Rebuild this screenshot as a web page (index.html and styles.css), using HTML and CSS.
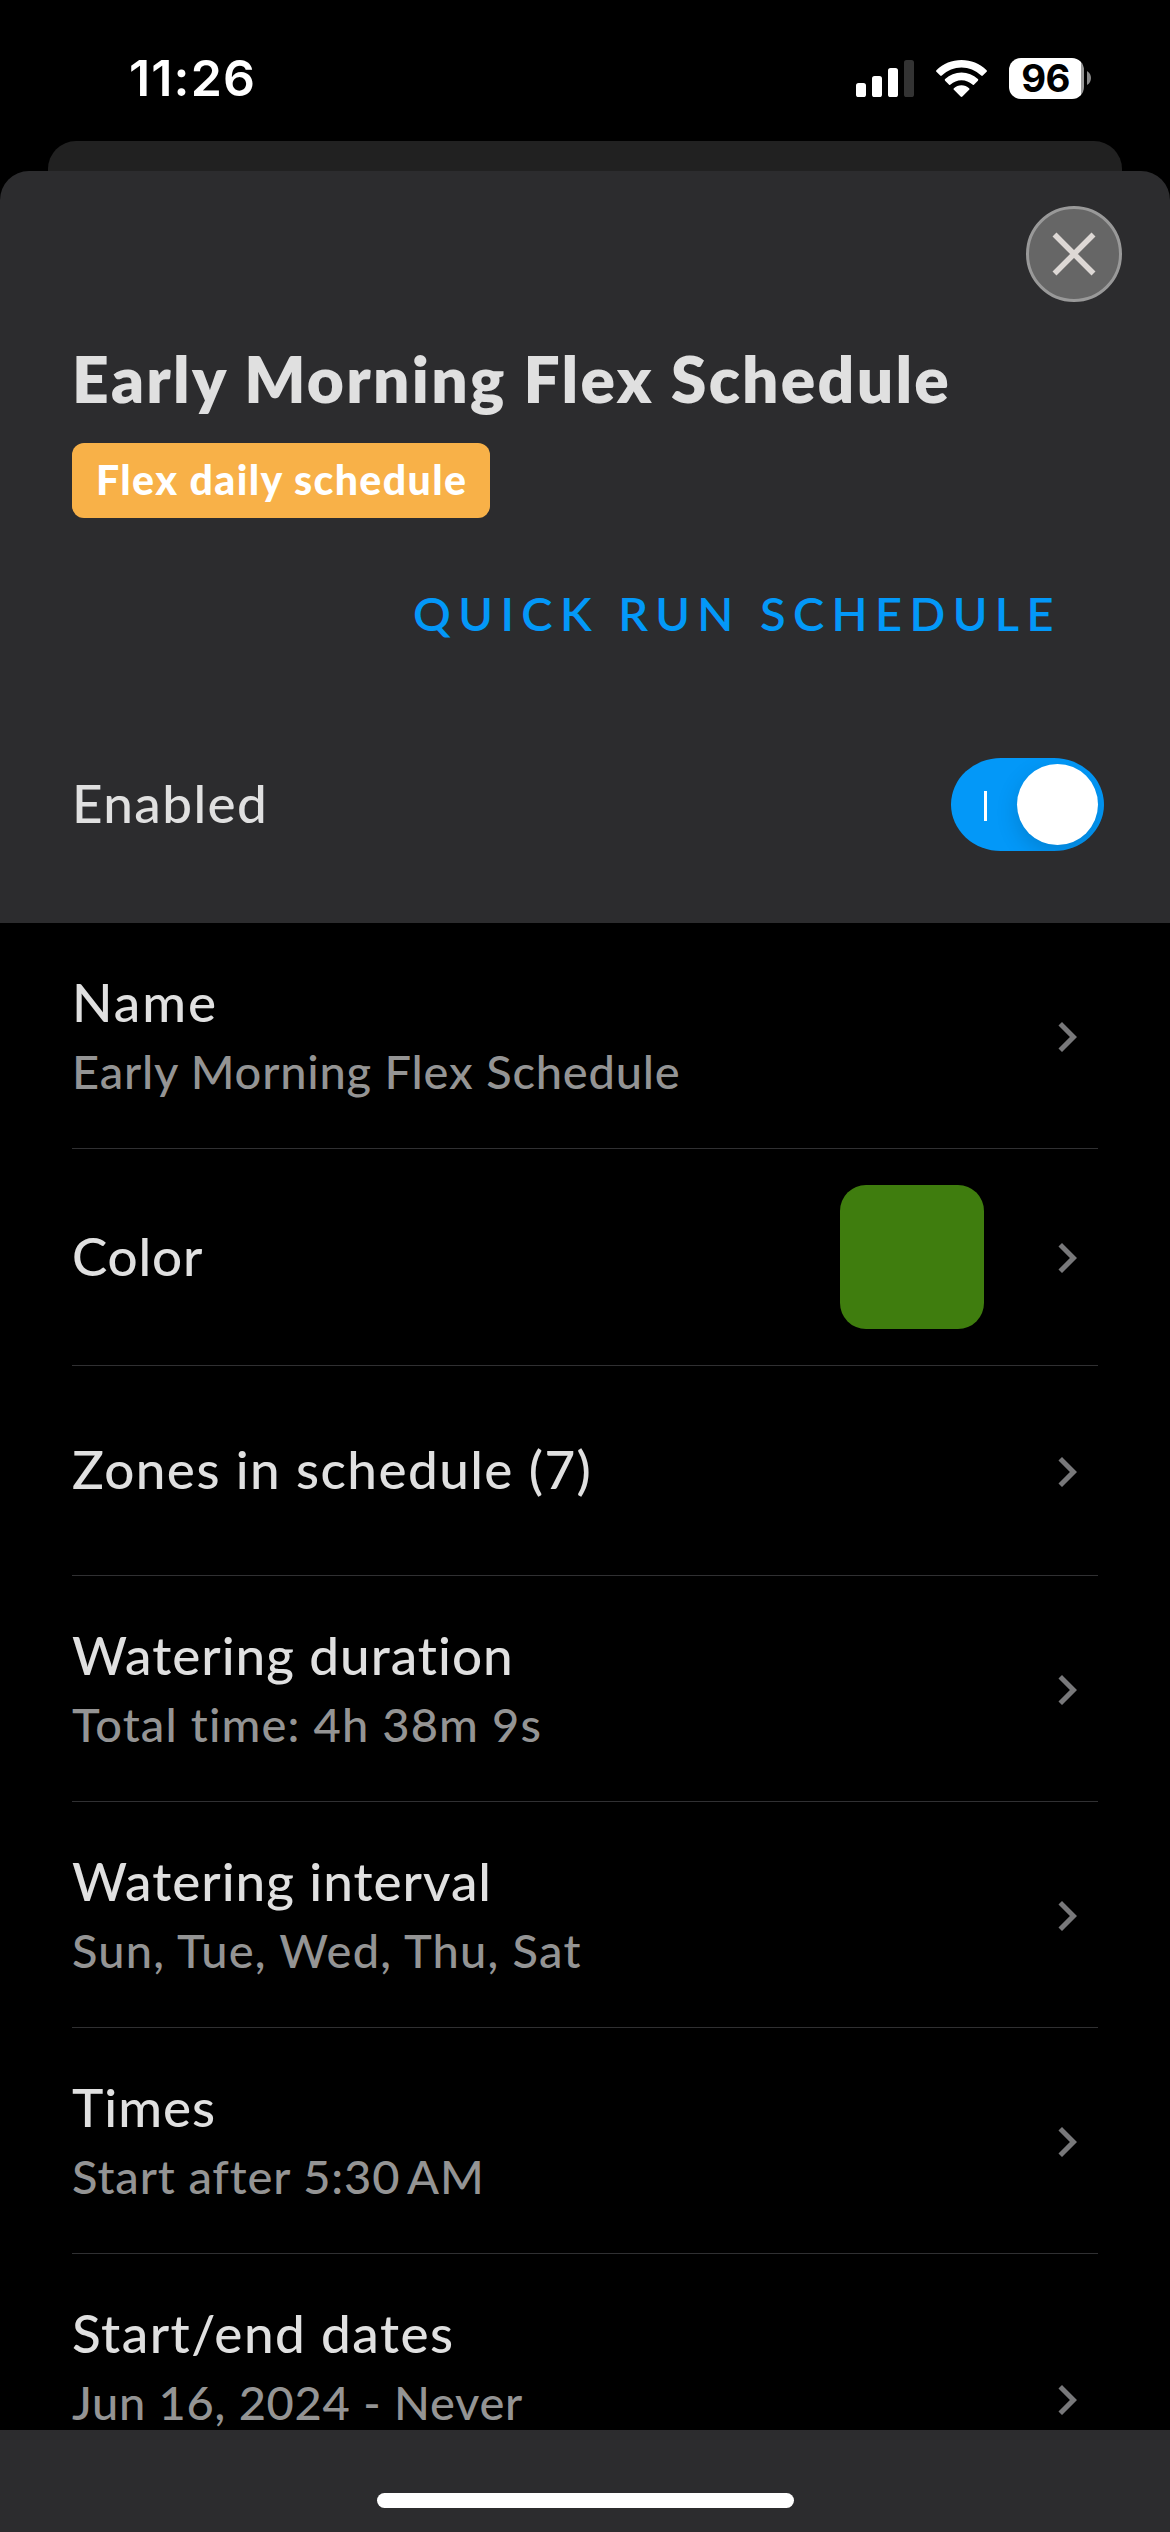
FILE: index.html
```html
<!DOCTYPE html>
<html lang="en">
<head>
<meta charset="utf-8">
<title>Schedule settings</title>
<link rel="stylesheet" href="styles.css">
</head>
<body>
<svg class="defs" aria-hidden="true"><symbol id="chevron" viewBox="0 0 24 24"><path d="M8.59 16.59 13.17 12 8.59 7.41 10 6l6 6-6 6z"/></symbol></svg>
<div class="screen">
  <header class="status">
    <span class="time">11:26</span>
    <div class="status-icons">
      <svg width="58" height="37" viewBox="0 0 58 37" fill="#fff">
        <rect y="23" width="10" height="14" rx="2.6"/><rect x="16" y="16" width="10" height="21" rx="2.6"/>
        <rect x="32" y="8" width="10" height="29" rx="2.6"/><rect x="48" width="10" height="37" rx="2.6" fill="#333"/>
      </svg>
      <svg width="51" height="37" viewBox="0 0 51 37" fill="#fff">
        <path d="M.4 10.2C7.400 3.400 16 0 25.500 0S43.600 3.400 50.600 10.200Q51.300 11 50.600 11.800L46.800 15.600Q46 16.300 45.200 15.600C39.500 10.300 32.800 7.600 25.500 7.600S11.500 10.300 5.800 15.600Q5 16.300 4.200 15.600L.4 11.800Q-.3 11 .4 10.200z"/>
        <path d="M9.100 19.100C13.700 14.800 19.300 12.500 25.500 12.500S37.300 14.800 41.900 19.100Q42.700 19.900 41.900 20.700L37.900 24.700Q37.200 25.300 36.400 24.600C33.400 21.900 29.700 20.300 25.500 20.300S17.600 21.900 14.600 24.600Q13.800 25.300 13.100 24.700L9.100 20.700Q8.300 19.900 9.100 19.100z"/>
        <path d="M17.900 28.200C20 26.300 22.600 25.300 25.500 25.300S31 26.300 33.100 28.200Q33.900 29 33.100 29.800L26.400 36.500Q25.500 37.300 24.600 36.500L17.900 29.800Q17.100 29 17.900 28.200z"/>
      </svg>
      <div class="battery"><div class="battery-body">96</div>
        <svg width="4" height="14" viewBox="0 0 4 14"><path d="M0 0q4 2.500 4 7t-4 7z" fill="#888"/></svg>
      </div>
    </div>
  </header>
  <div class="sheet-behind"></div>
  <main class="sheet">
    <section class="head">
      <button class="close" aria-label="Close"><svg width="44" height="44" viewBox="0 0 44 44"><path d="M2.500 2.500l39 39M41.500 2.500l-39 39" stroke="#ddd8d5" stroke-width="5.600"/></svg></button>
      <h1 class="title">Early Morning Flex Schedule</h1>
      <span class="badge">Flex daily schedule</span>
      <a class="quick">QUICK RUN SCHEDULE</a>
      <div class="enabled"><span class="label t-enabled">Enabled</span><div class="toggle"><i class="tick"></i><i class="knob"></i></div></div>
    </section>
    <section class="list">
      <div class="row">
        <div class="text"><div class="label t-name">Name</div><div class="sub t-early">Early Morning Flex Schedule</div></div>
        <svg class="chev"><use href="#chevron"/></svg>
      </div>
      <div class="row color">
        <div class="text single"><div class="label t-color">Color</div></div>
        <div class="swatch"></div>
        <svg class="chev"><use href="#chevron"/></svg>
      </div>
      <div class="row zones">
        <div class="text single"><div class="label t-zones">Zones in schedule (7)</div></div>
        <svg class="chev"><use href="#chevron"/></svg>
      </div>
      <div class="row">
        <div class="text"><div class="label">Watering duration</div><div class="sub t-total">Total time: 4h 38m 9s</div></div>
        <svg class="chev"><use href="#chevron"/></svg>
      </div>
      <div class="row">
        <div class="text"><div class="label">Watering interval</div><div class="sub t-days">Sun, Tue, Wed, Thu, Sat</div></div>
        <svg class="chev"><use href="#chevron"/></svg>
      </div>
      <div class="row">
        <div class="text"><div class="label">Times</div><div class="sub t-after">Start after 5:30&#8201;AM</div></div>
        <svg class="chev"><use href="#chevron"/></svg>
      </div>
      <div class="row tall">
        <div class="text"><div class="label t-dates">Start/end dates</div><div class="sub t-jun">Jun 16, 2024 - Never</div></div>
        <svg class="chev"><use href="#chevron"/></svg>
      </div>
    </section>
    <footer class="foot"><div class="home"></div></footer>
  </main>
</div>
</body>
</html>
```
FILE: styles.css
```css
* { box-sizing: border-box; }
body { margin: 0; background: #000; font-family: Lato, "Open Sans", sans-serif; }
.defs { display: none; }
svg { display: block; flex: none; }

.screen { width: 1170px; height: 2532px; display: flex; flex-direction: column; overflow: hidden; background: #000; }

.status { flex: none; height: 141px; padding: 15px 79px 0 129px; display: flex; align-items: center; justify-content: space-between; }
.time { font: 600 50px/60px Inter, sans-serif; letter-spacing: 1.16px; color: #fff; }
.status-icons { display: flex; align-items: center; gap: 22px; }
.battery { display: flex; align-items: center; gap: 3px; }
.battery-body { width: 75px; height: 41px; border-radius: 12px; background: linear-gradient(90deg, #fff 72px, #999 72px); color: #000; font: 700 38.4px/40px Inter, sans-serif; letter-spacing: -.8px; text-align: center; padding-right: 2px; }

.sheet-behind { flex: none; height: 30px; margin: 0 48px; background: #212121; border-radius: 28px 28px 0 0; }
.sheet { flex: 1; min-height: 0; display: flex; flex-direction: column; background: #2c2c2e; border-radius: 29px 29px 0 0; overflow: hidden; }

.head { flex: none; height: 752px; padding: 35px 66px 0 72px; display: flex; flex-direction: column; align-items: flex-start; }
.close { flex: none; align-self: flex-end; width: 96px; height: 96px; margin-right: -18px; padding: 0; display: flex; align-items: center; justify-content: center; border: 3px solid #999; border-radius: 50%; background: #666; }
.title { margin: 39px 0 0; font-size: 64px; line-height: 76px; font-weight: 800; letter-spacing: 2.28px; color: #e0e0e0; white-space: nowrap; }
.badge { margin-top: 26px; width: 418px; height: 75px; padding-left: 24px; border-radius: 12px; background: #f8b148; color: #fff; font-size: 41px; line-height: 74px; font-weight: 900; letter-spacing: 1.4px; white-space: nowrap; }
.quick { align-self: flex-end; margin: 65px 43px 0 0; font-size: 47px; line-height: 60px; font-weight: 600; letter-spacing: 7.4px; color: #0398f8; white-space: nowrap; }
.enabled { align-self: stretch; margin-top: 115px; display: flex; align-items: center; justify-content: space-between; }
.toggle { width: 153px; height: 93px; padding: 0 6px 0 33px; display: flex; align-items: center; justify-content: space-between; background: #0398f8; border-radius: 50px / 46.5px; overflow: hidden; }
.tick { width: 3px; height: 30px; margin-top: 3px; background: #fff; }
.knob { width: 81px; height: 81px; border-radius: 50%; background: #fff; box-shadow: 0 8px 22px rgba(0, 0, 0, .15); }

.label { font-size: 53px; line-height: 62px; font-weight: 500; letter-spacing: 1px; color: #e0e0e0; white-space: nowrap; }
.sub { margin-top: 8px; font-size: 47px; line-height: 60px; font-weight: 500; letter-spacing: 1px; color: #949494; white-space: nowrap; }

.list { flex: none; height: 1507px; padding: 0 72px; background: #000; overflow: hidden; }
.row { height: 226px; border-bottom: 1px solid #303032; display: flex; align-items: center; }
.row.color { height: 217px; }
.row.zones { height: 210px; }
.row.tall { height: 290px; }
.tall .text { align-self: flex-start; margin-top: 48px; }
.text { flex: 1; }
.single { padding-bottom: 3px; }
.swatch { width: 144px; height: 144px; margin-right: 53px; border-radius: 26px; background: #3f7d0e; }
.chev { width: 60px; height: 60px; margin: 2px 1px 0 0; fill: #78787a; }

.t-enabled { letter-spacing: 1.4px; padding-bottom: 4px; }
.t-name { letter-spacing: 1.95px; }
.t-early { letter-spacing: .8px; }
.t-color { letter-spacing: .8px; }
.t-zones { letter-spacing: 1.45px; }
.t-total { letter-spacing: 1.13px; }
.t-days { letter-spacing: 1.2px; }
.t-after { letter-spacing: .88px; }
.t-dates { letter-spacing: 1.46px; }
.t-jun { letter-spacing: .72px; }

.foot { flex: 1; padding-top: 63px; background: #2c2c2e; }
.home { width: 417px; height: 15px; margin: 0 auto; border-radius: 8px; background: #fff; }
```
